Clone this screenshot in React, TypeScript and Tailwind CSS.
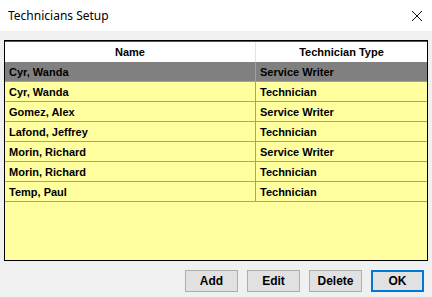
import React from "react";

const rows = [
  { name: "Cyr, Wanda", type: "Service Writer", sel: true },
  { name: "Cyr, Wanda", type: "Technician" },
  { name: "Gomez, Alex", type: "Service Writer" },
  { name: "Lafond, Jeffrey", type: "Technician" },
  { name: "Morin, Richard", type: "Service Writer" },
  { name: "Morin, Richard", type: "Technician" },
  { name: "Temp, Paul", type: "Technician" },
];

export default function App() {
  return (
    <div className="w-[432px] h-[297px] bg-[#f0f0f0] overflow-hidden flex flex-col" style={{ fontFamily: '"Liberation Sans", Arial, sans-serif' }}>
      <div className="h-[31px] bg-white flex items-center justify-between pl-[8px] pr-[9px] shrink-0">
        <span className="text-[12px] text-black" style={{ fontFamily: '"Noto Sans", "Open Sans", sans-serif' }}>Technicians Setup</span>
        <svg width="12" height="12" viewBox="0 0 12 12" className="mt-[1px]">
          <path d="M1 1 L11 11 M11 1 L1 11" stroke="#111" strokeWidth="1" fill="none" />
        </svg>
      </div>
      <div className="px-[4px] pt-[9px]">
        <div className="h-[221px] border border-black bg-[#ffffa0] flex flex-col">
          <div className="h-[21px] bg-white flex border-t border-[#555] text-[11px] font-bold text-black shrink-0">
            <div className="w-[251px] flex items-center justify-center border-r border-[#e3e3e3]">Name</div>
            <div className="flex-1 flex items-center justify-center">Technician Type</div>
          </div>
          {rows.map((r, i) => (
            <div key={i} className={`h-[20px] flex border-b border-[#a0a0a0] text-[11px] font-bold text-black shrink-0 ${r.sel ? "bg-[#808080]" : "bg-[#ffffa0]"}`}>
              <div className="w-[251px] flex items-center pl-[4px] pt-[1px] border-r border-[#a0a0a0]">{r.name}</div>
              <div className="flex-1 flex items-center pl-[4px] pt-[1px]">{r.type}</div>
            </div>
          ))}
        </div>
      </div>
      <div className="flex justify-end gap-[9px] pr-[8px] mt-[9px]">
        {["Add", "Edit", "Delete"].map((b) => (
          <div key={b} className="w-[53px] h-[22px] bg-[#e1e1e1] border border-[#adadad] flex items-center justify-center text-[12px] font-bold text-black">{b}</div>
        ))}
        <div className="w-[53px] h-[22px] bg-[#e1e1e1] border-2 border-[#0078d7] flex items-center justify-center text-[12px] font-bold text-black">OK</div>
      </div>
    </div>
  );
}
